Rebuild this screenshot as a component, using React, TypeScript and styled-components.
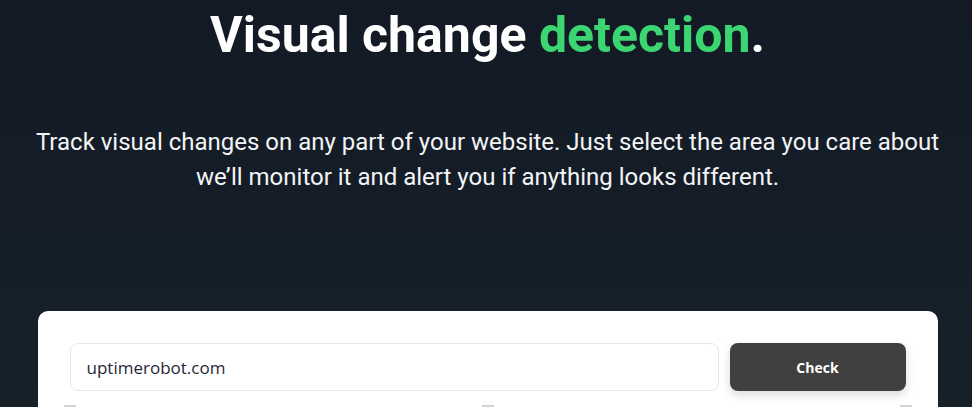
import styled, { createGlobalStyle } from 'styled-components';

const GlobalStyle = createGlobalStyle`
  html, body {
    margin: 0;
    padding: 0;
    overflow: hidden;
    background: #141b26;
  }
`;

const Page = styled.div`
  width: 975px;
  height: 407px;
  overflow: hidden;
  background: linear-gradient(180deg, #131a25 0%, #16212a 100%);
  font-family: Roboto, 'Liberation Sans', sans-serif;
  display: flex;
  flex-direction: column;
  align-items: center;
`;

const Title = styled.h1`
  margin: 5px 0 0;
  font-size: 50px;
  line-height: 60px;
  font-weight: 700;
  color: #ffffff;
  text-align: center;
`;

const Accent = styled.span`
  color: #3bd671;
`;

const Lead = styled.p`
  margin: 60px 0 0;
  width: 930px;
  font-size: 24px;
  line-height: 35px;
  font-weight: 400;
  color: #f3f4f6;
  text-align: center;
`;

const Card = styled.div`
  margin-top: 116px;
  width: 900px;
  box-sizing: border-box;
  padding: 32px 32px 0;
  background: #ffffff;
  border-radius: 10px 10px 0 0;
  flex: 1;
`;

const Form = styled.form`
  display: flex;
  gap: 11px;
`;

const UrlInput = styled.input`
  flex: 1;
  height: 48px;
  box-sizing: border-box;
  padding: 0 16px;
  border: 1px solid #e5e7eb;
  border-radius: 8px;
  font-family: 'Open Sans', 'Noto Sans', sans-serif;
  font-size: 17px;
  color: #1f2937;
  outline: none;
`;

const CheckButton = styled.button`
  width: 176px;
  height: 48px;
  border: none;
  border-radius: 8px;
  background: #404040;
  color: #ffffff;
  font-family: 'Open Sans', 'Noto Sans', sans-serif;
  font-size: 14px;
  font-weight: 700;
  box-shadow: 0 4px 10px rgba(0, 0, 0, 0.15);
  cursor: pointer;
`;

const Ticks = styled.div`
  display: flex;
  justify-content: space-between;
  margin: 14px -6px 0;
`;

const Tick = styled.span`
  width: 12px;
  height: 3px;
  background: #d4d4d4;
`;

export default function App() {
  return (
    <>
      <GlobalStyle />
      <Page>
        <Title>
          Visual change <Accent>detection</Accent>.
        </Title>
        <Lead>
          Track visual changes on any part of your website. Just select the area you care about
          we’ll monitor it and alert you if anything looks different.
        </Lead>
        <Card>
          <Form onSubmit={(e) => e.preventDefault()}>
            <UrlInput defaultValue="uptimerobot.com" />
            <CheckButton type="submit">Check</CheckButton>
          </Form>
          <Ticks>
            <Tick />
            <Tick />
            <Tick />
          </Ticks>
        </Card>
      </Page>
    </>
  );
}
